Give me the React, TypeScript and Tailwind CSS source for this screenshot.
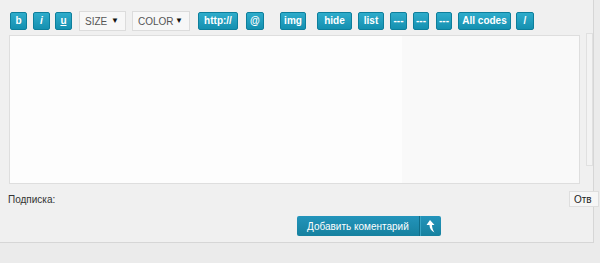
import React from 'react';

const font = { fontFamily: '"Liberation Sans", Arial, sans-serif' };

function Btn({ label, w, ml, extra = '' }: { label: string; w: string; ml: string; extra?: string }) {
	return (
		<button
			className={`${w} ${ml} h-[18px] shrink-0 rounded-[2px] border border-[#0d7f9c] bg-gradient-to-b from-[#2eaccb] to-[#1490b0] text-[10px] font-bold leading-none text-white`}
			style={font}
		>
			<span className={extra}>{label}</span>
		</button>
	);
}

function Select({ label, w, ml }: { label: string; w: string; ml: string }) {
	return (
		<div
			className={`${w} ${ml} flex h-[20px] shrink-0 items-center justify-between border border-[#dcdcdc] bg-[#f7f7f7] pl-[5px] pr-[6px] text-[10px] text-[#555]`}
			style={font}
		>
			<span>{label}</span>
			<span className="text-[8px] text-[#111]">▼</span>
		</div>
	);
}

export default function App() {
	return (
		<div className="h-[263px] w-[600px] overflow-hidden bg-[#ebebeb]" style={font}>
			<div className="h-[243px] w-[594px] border-b border-r border-[#d6d6d6] bg-[#f0f0f0]">
				{/* toolbar */}
				<div className="flex items-center pl-[10px] pt-[11px]">
					<Btn label="b" w="w-[17px]" ml="ml-0" />
					<Btn label="i" w="w-[17px]" ml="ml-[6px]" extra="italic" />
					<Btn label="u" w="w-[17px]" ml="ml-[5px]" extra="underline" />
					<Select label="SIZE" w="w-[47px]" ml="ml-[7px]" />
					<Select label="COLOR" w="w-[58px]" ml="ml-[6px]" />
					<Btn label="http://" w="w-[40px]" ml="ml-[8px]" />
					<Btn label="@" w="w-[18px]" ml="ml-[8px]" />
					<Btn label="img" w="w-[26px]" ml="ml-[16px]" />
					<Btn label="hide" w="w-[35px]" ml="ml-[11px]" />
					<Btn label="list" w="w-[26px]" ml="ml-[6px]" />
					<Btn label="---" w="w-[17px]" ml="ml-[6px]" />
					<Btn label="---" w="w-[16px]" ml="ml-[6px]" />
					<Btn label="---" w="w-[16px]" ml="ml-[7px]" />
					<Btn label="All codes" w="w-[53px]" ml="ml-[6px]" />
					<Btn label="/" w="w-[18px]" ml="ml-[5px]" />
				</div>

				{/* editor */}
				<div className="mt-[4px] flex items-start">
					<div className="ml-[9px] flex h-[149px] w-[572px] border border-[#dedede] bg-[#fdfdfd]">
						<div className="flex-1" />
						<div className="w-[177px] bg-[#f9f9f9]" />
					</div>
					<div className="ml-[6px] mt-[-2px] h-[133px] w-[7px] border border-[#e0e0e0] bg-[#f3f3f3]" />
				</div>

				{/* signature row */}
				<div className="mt-[7px] flex items-center">
					<span className="ml-[8px] text-[10px] text-[#333]">Подписка:</span>
					<div className="ml-auto mr-[-6px] flex h-[16px] w-[30px] items-center overflow-hidden whitespace-nowrap border border-[#dedede] bg-[#f6f6f6] pl-[4px] text-[10px] text-[#222]">
						Отв
					</div>
				</div>

				{/* submit */}
				<div className="mt-[9px] flex pl-[297px]">
					<button className="flex h-[20px] items-stretch overflow-hidden rounded-[2px] bg-gradient-to-b from-[#2394bb] to-[#16819f] text-white">
						<span className="flex items-center border-r border-[#0f6c87] px-[10px] text-[10px]" style={font}>
							Добавить коментарий
						</span>
						<span className="flex w-[21px] items-center justify-center border-l border-[#3aa6c6]">
							<svg width="9" height="13" viewBox="0 0 9 13">
								<path d="M4 0 L8.5 5 L6 5 C6 8 7 10 8.5 12.5 C5 11 3.5 8 3.5 5 L0.5 5 Z" fill="#fff" />
							</svg>
						</span>
					</button>
				</div>
			</div>
		</div>
	);
}
